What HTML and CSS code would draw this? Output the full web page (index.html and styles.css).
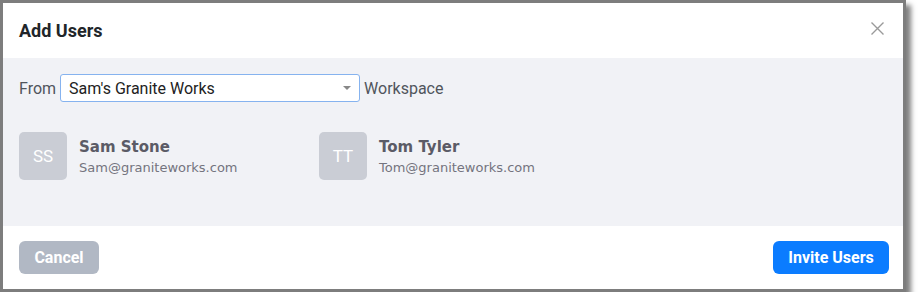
FILE: index.html
```html
<!DOCTYPE html>
<html>
<head>
    <title>Add Users</title>
    <link rel="stylesheet" href="styles.css">
</head>
<body>
    <div class="modal">
        <div class="modal-header">
            <h1>Add Users</h1>
            <button class="close-button" aria-label="Close">
                <svg width="13" height="13" viewBox="0 0 13 13">
                    <path d="M0.5 0.5 L12.5 12.5 M12.5 0.5 L0.5 12.5" stroke="#9a9a9a" stroke-width="1.4" fill="none"/>
                </svg>
            </button>
        </div>

        <div class="modal-body">
            <div class="from-row">
                <span>From</span>
                <div class="select">
                    <span>Sam's Granite Works</span>
                    <span class="caret"></span>
                </div>
                <span>Workspace</span>
            </div>

            <div class="user-list">
                <div class="user-card">
                    <div class="avatar">SS</div>
                    <div class="user-info">
                        <div class="user-name">Sam Stone</div>
                        <div class="user-email">Sam@graniteworks.com</div>
                    </div>
                </div>
                <div class="user-card">
                    <div class="avatar">TT</div>
                    <div class="user-info">
                        <div class="user-name">Tom Tyler</div>
                        <div class="user-email">Tom@graniteworks.com</div>
                    </div>
                </div>
            </div>
        </div>

        <div class="modal-footer">
            <button class="button cancel">Cancel</button>
            <button class="button primary">Invite Users</button>
        </div>
    </div>
</body>
</html>
```

FILE: styles.css
```css
body {
    margin: 0;
    background: #fff;
    font-family: Roboto, "Liberation Sans", sans-serif;
}
.modal {
    width: 900px;
    border: 3px solid #7d7d7d;
    background: #fff;
    box-shadow: 5px 5px 5px rgba(0, 0, 0, 0.5);
}
.modal-header {
    height: 55px;
    display: flex;
    justify-content: space-between;
    align-items: center;
    padding: 0 19px 0 16px;
}
.modal-header h1 {
    margin: 0;
    font-size: 18px;
    font-weight: 700;
    color: #212529;
}
.close-button {
    border: none;
    background: none;
    padding: 0;
    width: 13px;
    height: 13px;
    display: flex;
    margin-top: -4px;
    cursor: pointer;
}
.modal-body {
    height: 168px;
    box-sizing: border-box;
    background: #f1f2f6;
    padding: 16px 16px 0 16px;
}
.from-row {
    display: flex;
    align-items: center;
    gap: 4px;
    font-size: 16px;
    color: #50555c;
}
.select {
    width: 300px;
    height: 28px;
    box-sizing: border-box;
    border: 1px solid #86b3ef;
    border-radius: 3px;
    background: #fff;
    display: flex;
    align-items: center;
    justify-content: space-between;
    padding: 0 8px 0 8px;
    color: #222;
}
.caret {
    width: 0;
    height: 0;
    border-left: 4px solid transparent;
    border-right: 4px solid transparent;
    border-top: 4px solid #888;
}
.user-list {
    display: grid;
    grid-template-columns: 300px 300px;
    margin-top: 30px;
}
.user-card {
    display: flex;
    align-items: flex-start;
    gap: 12px;
}
.avatar {
    width: 48px;
    height: 48px;
    border-radius: 5px;
    background: #cacdd5;
    color: #fff;
    font-size: 17px;
    display: flex;
    align-items: center;
    justify-content: center;
}
.user-info {
    font-family: "DejaVu Sans", Verdana, sans-serif;
    padding-top: 5px;
}
.user-name {
    font-size: 15px;
    font-weight: bold;
    color: #5b5b66;
    line-height: 20px;
}
.user-email {
    font-size: 13px;
    color: #74747e;
    line-height: 20px;
    margin-top: 1px;
}
.modal-footer {
    height: 63px;
    display: flex;
    justify-content: space-between;
    align-items: center;
    padding: 0 14px 0 16px;
}
.button {
    border: none;
    height: 33px;
    border-radius: 6px;
    color: #fff;
    font-family: Roboto, "Liberation Sans", sans-serif;
    font-size: 16px;
    font-weight: 700;
    padding: 0;
    cursor: pointer;
}
.button.cancel {
    width: 80px;
    background: #b1b8c4;
}
.button.primary {
    width: 116px;
    background: #0b7cff;
}
```
